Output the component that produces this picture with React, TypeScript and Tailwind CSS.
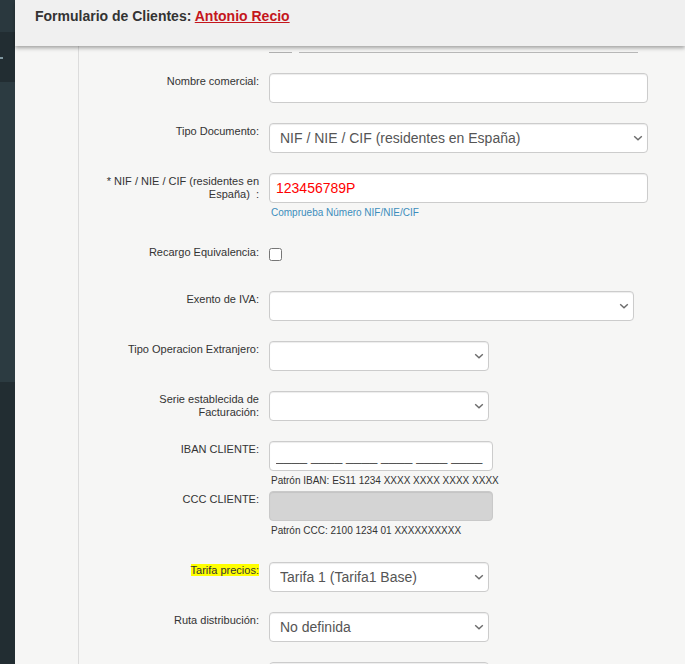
import React from "react";

const Chevron = () => (
  <svg
    className="absolute right-[5px] top-[12px] pointer-events-none"
    width="10"
    height="6"
    viewBox="0 0 10 6"
    fill="none"
  >
    <path d="M1.2 1.2L5 4.8L8.8 1.2" stroke="#6b6b6b" strokeWidth="1.4" />
  </svg>
);

function Row({
  label,
  children,
  className,
}: {
  label: React.ReactNode;
  children: React.ReactNode;
  className?: string;
}) {
  return (
    <div className={"flex items-start " + (className ?? "")}>
      <div className="w-[160px] shrink-0 pt-[2px] text-right text-[11px] leading-[13px] text-[#333]">
        {label}
      </div>
      <div className="ml-[10px]">{children}</div>
    </div>
  );
}

function Select({ value, w }: { value: string; w: string }) {
  return (
    <div className={"relative " + w}>
      <select
        defaultValue={value}
        className="block h-[30px] w-full appearance-none rounded-[4px] border border-[#ccc] bg-white pl-[10px] text-[14px] text-[#555] shadow-[inset_0_1px_1px_rgba(0,0,0,0.075)] outline-none"
      >
        <option value={value}>{value}</option>
      </select>
      <Chevron />
    </div>
  );
}

function TextInput({
  w,
  value,
  placeholder,
  red,
  disabled,
}: {
  w: string;
  value?: string;
  placeholder?: string;
  red?: boolean;
  disabled?: boolean;
}) {
  return (
    <input
      readOnly
      disabled={disabled}
      defaultValue={value}
      placeholder={placeholder}
      className={
        "block h-[30px] rounded-[4px] border px-[6px] text-[14px] shadow-[inset_0_1px_1px_rgba(0,0,0,0.075)] outline-none placeholder:text-[#555] " +
        w +
        (red ? " text-[#ff0000]" : " text-[#555]") +
        (disabled ? " border-[#c9c9c9] bg-[#d4d4d4]" : " border-[#ccc] bg-white")
      }
    />
  );
}

const Help = ({ children, blue }: { children: React.ReactNode; blue?: boolean }) => (
  <div
    className={
      "ml-[2px] mt-[3px] text-[10px] leading-[13px] " + (blue ? "text-[#3c8dbc]" : "text-[#333]")
    }
  >
    {children}
  </div>
);

export default function App() {
  return (
    <div
      className="flex h-[664px] w-[685px] overflow-hidden bg-[#f6f6f5]"
      style={{ fontFamily: '"Liberation Sans", Arial, sans-serif' }}
    >
      {/* sidebar */}
      <div className="flex w-[15px] shrink-0 flex-col">
        <div className="h-[32px] bg-[#2a383e]" />
        <div className="h-[50px] bg-[#222d32] pt-[25px]">
          <div className="h-[2px] w-[3px] bg-[#7f969f]" />
        </div>
        <div className="h-[300px] bg-[#2c3b41]" />
        <div className="flex-1 bg-[#222d32]" />
      </div>

      {/* main */}
      <div className="flex min-w-0 flex-1 flex-col">
        <div className="relative z-10 h-[46px] shrink-0 bg-[#f0f0f0] pl-[20px] pt-[8px] text-[14px] font-bold leading-[16px] text-[#333] shadow-[0_2px_4px_rgba(0,0,0,0.35)]">
          Formulario de Clientes:{" "}
          <span className="text-[#c4161c] underline">Antonio Recio</span>
        </div>

        <div className="flex flex-1">
          <div className="w-[63px] shrink-0" />
          <div className="w-[1px] shrink-0 bg-[#dcdcdc]" />
          <div className="flex-1 pl-[20px]">
            {/* partially scrolled row */}
            <div className="mt-[6px] flex">
              <div className="w-[170px] shrink-0" />
              <div className="h-[1px] w-[23px] bg-[#b0b0b0]" />
              <div className="ml-[7px] h-[1px] w-[339px] bg-[#b8b8b8]" />
            </div>

            <Row label="Nombre comercial:" className="mt-[20px]">
              <TextInput w="w-[379px]" />
            </Row>

            <Row label="Tipo Documento:" className="mt-[20px]">
              <Select w="w-[379px]" value="NIF / NIE / CIF (residentes en España)" />
            </Row>

            <Row label={"* NIF / NIE / CIF (residentes en España)\u00a0 :"} className="mt-[20px]">
              <TextInput w="w-[379px]" value="123456789P" red />
              <Help blue>Comprueba Número NIF/NIE/CIF</Help>
            </Row>

            <Row label="Recargo Equivalencia:" className="mt-[25px]">
              <input
                type="checkbox"
                className="m-0 mt-[4px] block h-[13px] w-[13px]"
              />
            </Row>

            <Row label="Exento de IVA:" className="mt-[30px]">
              <Select w="w-[365px]" value="" />
            </Row>

            <Row label="Tipo Operacion Extranjero:" className="mt-[20px]">
              <Select w="w-[220px]" value="" />
            </Row>

            <Row label="Serie establecida de Facturación:" className="mt-[20px]">
              <Select w="w-[220px]" value="" />
            </Row>

            <Row label="IBAN CLIENTE:" className="mt-[20px]">
              <TextInput w="w-[224px]" placeholder="____ ____ ____ ____ ____ ____" />
              <Help>Patrón IBAN: ES11 1234 XXXX XXXX XXXX XXXX</Help>
            </Row>

            <Row label="CCC CLIENTE:" className="mt-[4px]">
              <TextInput w="w-[224px]" disabled />
              <Help>Patrón CCC: 2100 1234 01 XXXXXXXXXX</Help>
            </Row>

            <Row
              label={<span className="bg-[#ffff00]">Tarifa precios:</span>}
              className="mt-[25px]"
            >
              <Select w="w-[220px]" value="Tarifa 1 (Tarifa1 Base)" />
            </Row>

            <Row label="Ruta distribución:" className="mt-[20px]">
              <Select w="w-[220px]" value="No definida" />
            </Row>

            <Row label="" className="mt-[20px]">
              <TextInput w="w-[220px]" />
            </Row>
          </div>
        </div>
      </div>
    </div>
  );
}
